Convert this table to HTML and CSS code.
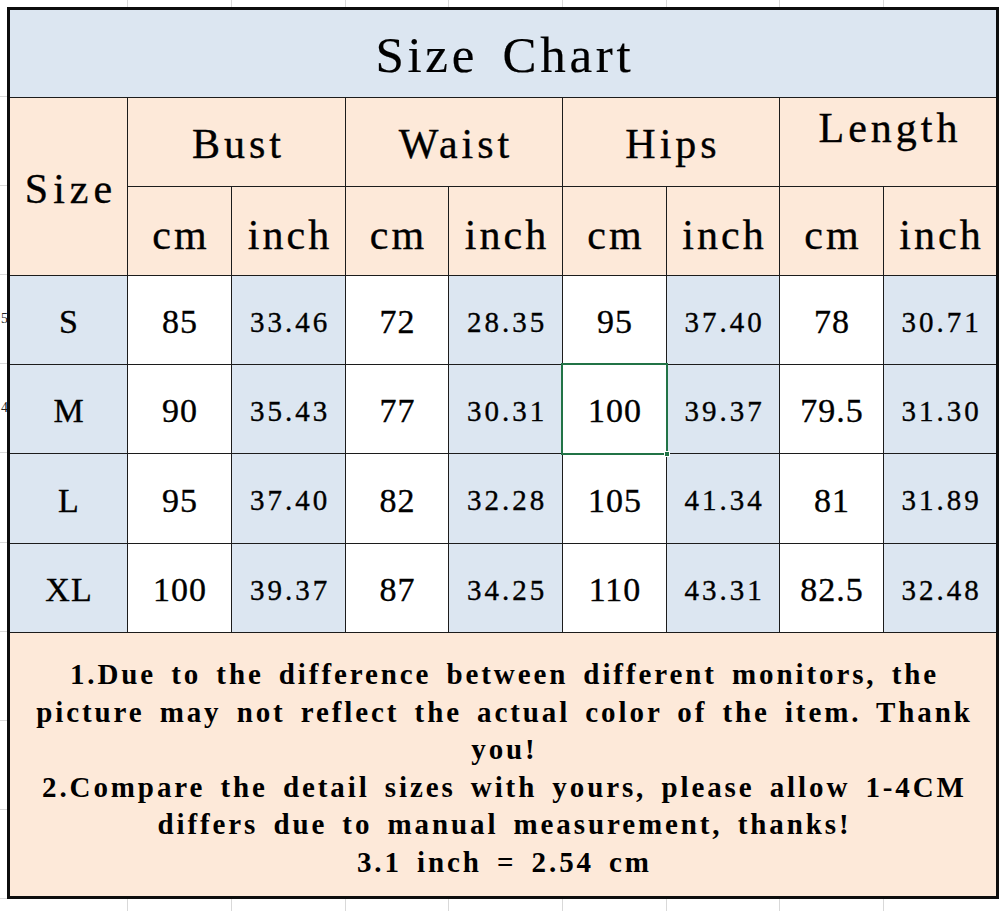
FILE: index.html
```html
<!DOCTYPE html>
<html lang="en">
<head>
<meta charset="utf-8">
<title>Size Chart</title>
<link rel="stylesheet" href="styles.css">
</head>
<body>
<div class="gutter">
  <div class="g g-top"></div>
  <div class="g g-87"></div>
  <div class="g"></div>
  <div class="g"></div>
  <div class="g"><span>5</span></div>
  <div class="g"><span>4</span></div>
  <div class="g g-89"></div>
  <div class="g"></div>
  <div class="g"></div>
  <div class="g"></div>
  <div class="g"></div>
</div>
<div class="chart">
  <div class="cell title">Size Chart</div>

  <div class="cell hd size-hd">Size</div>
  <div class="cell hd grp">Bust</div>
  <div class="cell hd grp">Waist</div>
  <div class="cell hd grp">Hips</div>
  <div class="cell hd grp grp-up">Length</div>

  <div class="cell hd unit">cm</div>
  <div class="cell hd unit">inch</div>
  <div class="cell hd unit">cm</div>
  <div class="cell hd unit">inch</div>
  <div class="cell hd unit">cm</div>
  <div class="cell hd unit">inch</div>
  <div class="cell hd unit">cm</div>
  <div class="cell hd unit">inch</div>

  <div class="cell sz">S</div>
  <div class="cell cm">85</div>
  <div class="cell in">33.46</div>
  <div class="cell cm">72</div>
  <div class="cell in">28.35</div>
  <div class="cell cm">95</div>
  <div class="cell in">37.40</div>
  <div class="cell cm">78</div>
  <div class="cell in">30.71</div>

  <div class="cell sz">M</div>
  <div class="cell cm">90</div>
  <div class="cell in">35.43</div>
  <div class="cell cm">77</div>
  <div class="cell in">30.31</div>
  <div class="cell cm sel">100<span class="sel-box"><span class="sel-handle"></span></span></div>
  <div class="cell in">39.37</div>
  <div class="cell cm">79.5</div>
  <div class="cell in">31.30</div>

  <div class="cell sz">L</div>
  <div class="cell cm">95</div>
  <div class="cell in">37.40</div>
  <div class="cell cm">82</div>
  <div class="cell in">32.28</div>
  <div class="cell cm">105</div>
  <div class="cell in">41.34</div>
  <div class="cell cm">81</div>
  <div class="cell in">31.89</div>

  <div class="cell sz">XL</div>
  <div class="cell cm">100</div>
  <div class="cell in">39.37</div>
  <div class="cell cm">87</div>
  <div class="cell in">34.25</div>
  <div class="cell cm">110</div>
  <div class="cell in">43.31</div>
  <div class="cell cm">82.5</div>
  <div class="cell in">32.48</div>

  <div class="cell notes">
    <p>1.Due to the difference between different monitors, the<br>picture may not reflect the actual color of the item. Thank<br>you!<br>2.Compare the detail sizes with yours, please allow 1-4CM<br>differs due to manual measurement, thanks!<br>3.1 inch = 2.54 cm</p>
  </div>
</div>
</body>
</html>
```
FILE: styles.css
```css
html, body {
  margin: 0;
  padding: 0;
}

body {
  width: 1001px;
  height: 911px;
  overflow: hidden;
  display: flex;
  align-items: flex-start;
  background-color: #ffffff;
  background-image: linear-gradient(to right,
    transparent 127px, #d9d9d9 127px, #d9d9d9 128px, transparent 128px,
    transparent 231px, #d9d9d9 231px, #d9d9d9 232px, transparent 232px,
    transparent 345px, #d9d9d9 345px, #d9d9d9 346px, transparent 346px,
    transparent 448px, #d9d9d9 448px, #d9d9d9 449px, transparent 449px,
    transparent 562px, #d9d9d9 562px, #d9d9d9 563px, transparent 563px,
    transparent 666px, #d9d9d9 666px, #d9d9d9 667px, transparent 667px,
    transparent 779px, #d9d9d9 779px, #d9d9d9 780px, transparent 780px,
    transparent 883px, #d9d9d9 883px, #d9d9d9 884px, transparent 884px);
  font-family: "Liberation Serif", "Times New Roman", serif;
  color: #000;
}

/* left strip of the neighbouring spreadsheet column */
.gutter {
  width: 7px;
  flex: none;
  display: flex;
  flex-direction: column;
  overflow: hidden;
  background: #fff;
}

.g {
  height: 88px;
  border-bottom: 1px solid #d9d9d9;
  display: flex;
  align-items: center;
  justify-content: flex-end;
  padding-right: 3px;
  font-size: 14px;
  color: #222;
  white-space: nowrap;
}

.g span {
  margin-right: -4px;
}

.g-top {
  height: 9px;
  border-bottom: none;
}

.g-87 {
  height: 87px;
}

.g-89 {
  height: 89px;
}

/* the chart */
.chart {
  margin-top: 7px;
  flex: none;
  display: grid;
  grid-template-columns: 117px 103px 113px 102px 113px 103px 112px 103px 112px;
  grid-template-rows: 87px 88px 88px 88px 88px 89px 88px 263px;
  gap: 1px;
  background: #1c1c1c;
  border: 3px solid #0d0d0d;
}

.cell {
  display: flex;
  align-items: center;
  justify-content: center;
  white-space: nowrap;
  --ls: 0px;
  letter-spacing: var(--ls);
  padding-left: var(--ls);
  -webkit-text-stroke: 0.35px #000;
}

.title {
  grid-column: 1 / -1;
  background: #dce6f1;
  font-size: 51px;
  --ls: 3.7px;
  word-spacing: 8px;
  padding-top: 2px;
  -webkit-text-stroke: 0.2px #000;
}

.hd {
  background: #fde9d9;
  font-size: 42px;
}

.size-hd {
  grid-row: span 2;
  --ls: 5px;
  padding-top: 4px;
}

.grp {
  grid-column: span 2;
  --ls: 4px;
  padding-top: 4px;
}

.grp-up {
  padding-top: 0;
  padding-bottom: 28px;
}

.unit {
  --ls: 3px;
  padding-top: 8px;
}

.sz {
  background: #dce6f1;
  font-size: 34px;
  --ls: 1px;
  padding-top: 4px;
}

.cm {
  background: #ffffff;
  font-size: 34px;
  --ls: 1px;
  padding-top: 4px;
}

.in {
  background: #dce6f1;
  font-size: 29px;
  --ls: 3px;
  padding-top: 4px;
}

.sel {
  position: relative;
}

.sel-box {
  position: absolute;
  left: -2px;
  right: -2px;
  top: -2px;
  bottom: -2px;
  border: 2px solid #217346;
}

.sel-handle {
  position: absolute;
  right: -4px;
  bottom: -4px;
  width: 6px;
  height: 6px;
  background: #217346;
  border: 1px solid #fff;
  box-sizing: border-box;
}

.notes {
  grid-column: 1 / -1;
  background: #fde9d9;
  font-weight: bold;
  font-size: 29px;
  --ls: 2.9px;
  word-spacing: 5px;
  padding-top: 8px;
  -webkit-text-stroke: 0;
}

.notes p {
  margin: 0;
  text-align: center;
  line-height: 37.5px;
}
```
